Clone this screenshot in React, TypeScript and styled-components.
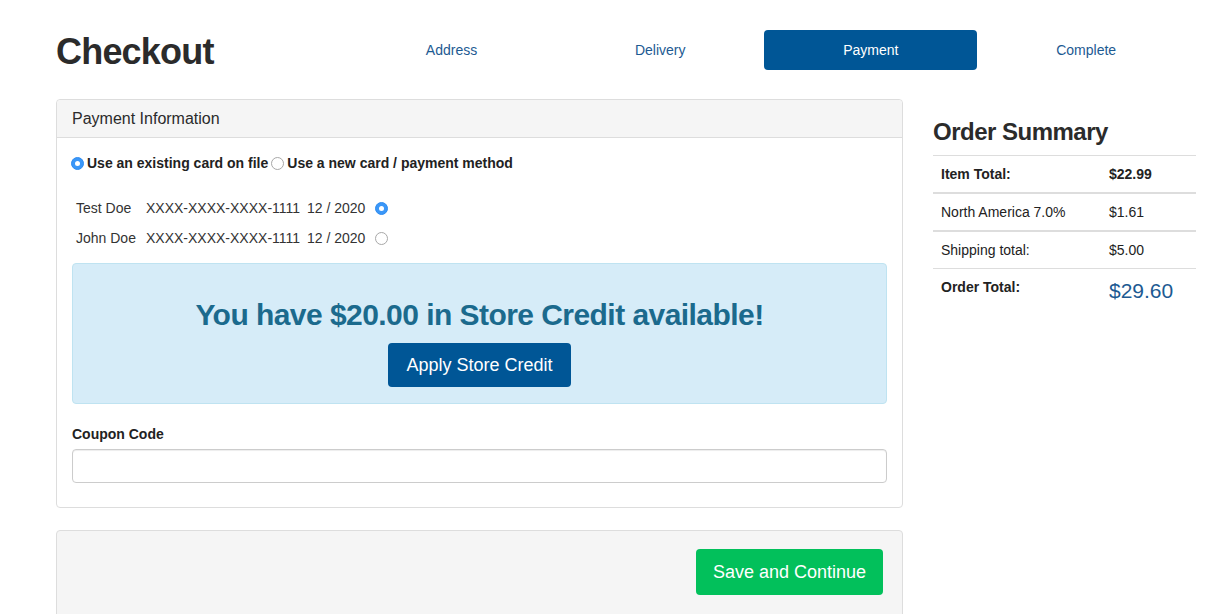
import React from "react";
import styled, { createGlobalStyle } from "styled-components";

const Global = createGlobalStyle`
  html, body { margin: 0; padding: 0; background: #fff; }
  body {
    font-family: "Liberation Sans", Arial, Helvetica, sans-serif;
    font-size: 14px;
    line-height: 20px;
    color: #333;
  }
  * { box-sizing: border-box; }
`;

const Page = styled.div`
  width: 1212px;
  height: 614px;
  overflow: hidden;
  padding-left: 56px;
`;

const Row = styled.div<{ $cols: string; $top?: number }>`
  display: grid;
  grid-template-columns: ${(p) => p.$cols};
  column-gap: 30px;
  width: 1141px;
  margin-top: ${(p) => p.$top ?? 0}px;
  align-items: start;
`;

const Title = styled.h1`
  margin: 32px 0 0;
  font-size: 36px;
  line-height: 40px;
  font-weight: 700;
  letter-spacing: -0.8px;
  color: #2b2b2b;
`;

const Steps = styled.nav`
  display: flex;
  margin-top: 30px;
`;

const Step = styled.div<{ $active?: boolean }>`
  flex: 1 1 auto;
  text-align: center;
  padding: 10px 15px;
  line-height: 20px;
  font-size: 14px;
  border-radius: 4px;
  color: ${(p) => (p.$active ? "#fff" : "#1d5a92")};
  background: ${(p) => (p.$active ? "#005696" : "transparent")};
`;

const Card = styled.section<{ $muted?: boolean; $top?: number }>`
  border: 1px solid #ddd;
  border-radius: 4px;
  background: ${(p) => (p.$muted ? "#f5f5f5" : "#fff")};
  margin-top: ${(p) => p.$top ?? 0}px;
`;

const CardHeader = styled.div`
  background: #f5f5f5;
  border-bottom: 1px solid #ddd;
  padding: 10px 15px;
  font-size: 16px;
  line-height: 17px;
  color: #2b2b2b;
  border-radius: 4px 4px 0 0;
`;

const CardBody = styled.div`
  padding: 15px 15px 24px;
`;

const MethodRow = styled.div`
  display: flex;
  align-items: center;
  gap: 3px;
  margin-left: -1px;
  font-weight: 700;
  font-size: 14px;
  line-height: 20px;
  color: #222;
`;

const Radio = styled.span<{ $checked?: boolean }>`
  position: relative;
  display: inline-block;
  width: 13px;
  height: 13px;
  border-radius: 50%;
  flex: none;
  background: ${(p) => (p.$checked ? "#3a97f8" : "#fff")};
  border: 1px solid ${(p) => (p.$checked ? "#2f8cf0" : "#a8a8a8")};
  &::after {
    content: "";
    display: ${(p) => (p.$checked ? "block" : "none")};
    position: absolute;
    left: 3px;
    top: 3px;
    width: 5px;
    height: 5px;
    border-radius: 50%;
    background: #fff;
  }
`;

const CardsTable = styled.table`
  margin-top: 20px;
  border-collapse: collapse;
  table-layout: fixed;
`;

const CardCell = styled.td<{ $w: number }>`
  width: ${(p) => p.$w}px;
  padding: 5px 0 5px 4px;
  line-height: 20px;
  white-space: nowrap;
  vertical-align: middle;
  font-size: 14px;
  color: #333;
  ${Radio} { vertical-align: -2px; }
`;

const CreditAlert = styled.div`
  margin-top: 10px;
  background: #d6ecf8;
  border: 1px solid #bfe3f1;
  border-radius: 4px;
  padding: 34px 15px 16px;
  display: flex;
  flex-direction: column;
  align-items: center;
`;

const CreditHeading = styled.h3`
  margin: 0 0 12px;
  font-size: 30px;
  line-height: 33px;
  font-weight: 700;
  letter-spacing: -0.55px;
  color: #1b6a8d;
`;

const Button = styled.button<{ $tone: "blue" | "green" }>`
  border: none;
  border-radius: 4px;
  font-family: inherit;
  font-size: 18px;
  line-height: 24px;
  color: #fff;
  cursor: pointer;
  background: ${(p) => (p.$tone === "blue" ? "#005696" : "#02c05b")};
  padding: ${(p) => (p.$tone === "blue" ? "10px 18px" : "11px 17px")};
`;

const Label = styled.label`
  display: block;
  margin-top: 20px;
  margin-bottom: 5px;
  font-weight: 700;
  font-size: 14px;
  line-height: 20px;
  color: #222;
`;

const Input = styled.input`
  display: block;
  width: 100%;
  height: 34px;
  border: 1px solid #ccc;
  border-radius: 4px;
  box-shadow: inset 0 1px 1px rgba(0, 0, 0, 0.075);
  padding: 6px 12px;
  font-family: inherit;
  font-size: 14px;
`;

const Actions = styled.div`
  display: flex;
  justify-content: flex-end;
  padding: 18px 19px 30px;
`;

const SummaryTitle = styled.h3`
  margin: 20px 0 10px;
  font-size: 24px;
  line-height: 26px;
  font-weight: 700;
  letter-spacing: -0.5px;
  color: #2b2b2b;
`;

const SummaryTable = styled.table`
  width: 263px;
  border-collapse: collapse;
`;

const SummaryRow = styled.tr<{ $thick?: boolean }>`
  border-top: ${(p) => (p.$thick ? 2 : 1)}px solid #ddd;
`;

const SummaryCell = styled.td<{ $bold?: boolean; $w?: number }>`
  padding: 8px;
  line-height: 20px;
  font-size: 14px;
  vertical-align: top;
  font-weight: ${(p) => (p.$bold ? 700 : 400)};
  width: ${(p) => (p.$w ? `${p.$w}px` : "auto")};
  color: #222;
`;

const GrandTotal = styled.span`
  display: block;
  font-size: 21px;
  line-height: 28px;
  color: #1d5a92;
`;

const cards = [
  { name: "Test Doe", number: "XXXX-XXXX-XXXX-1111", exp: "12 / 2020", checked: true },
  { name: "John Doe", number: "XXXX-XXXX-XXXX-1111", exp: "12 / 2020", checked: false },
];

export default function App() {
  return (
    <>
      <Global />
      <Page>
        <Row $cols="261px 848px">
          <Title>Checkout</Title>
          <Steps>
            <Step>Address</Step>
            <Step>Delivery</Step>
            <Step $active>Payment</Step>
            <Step>Complete</Step>
          </Steps>
        </Row>
        <Row $cols="847px 264px" $top={27}>
          <div>
            <Card>
              <CardHeader>Payment Information</CardHeader>
              <CardBody>
                <MethodRow>
                  <Radio $checked />
                  <span>Use an existing card on file</span>
                  <Radio />
                  <span>Use a new card / payment method</span>
                </MethodRow>
                <CardsTable>
                  <tbody>
                    {cards.map((c) => (
                      <tr key={c.name}>
                        <CardCell $w={70}>{c.name}</CardCell>
                        <CardCell $w={161}>{c.number}</CardCell>
                        <CardCell $w={68}>{c.exp}</CardCell>
                        <CardCell $w={24}>
                          <Radio $checked={c.checked} />
                        </CardCell>
                      </tr>
                    ))}
                  </tbody>
                </CardsTable>
                <CreditAlert>
                  <CreditHeading>You have $20.00 in Store Credit available!</CreditHeading>
                  <Button $tone="blue">Apply Store Credit</Button>
                </CreditAlert>
                <Label>Coupon Code</Label>
                <Input type="text" />
              </CardBody>
            </Card>
            <Card $muted $top={22}>
              <Actions>
                <Button $tone="green">Save and Continue</Button>
              </Actions>
            </Card>
          </div>
          <aside>
            <SummaryTitle>Order Summary</SummaryTitle>
            <SummaryTable>
              <tbody>
                <SummaryRow>
                  <SummaryCell $bold $w={168}>Item Total:</SummaryCell>
                  <SummaryCell $bold>$22.99</SummaryCell>
                </SummaryRow>
                <SummaryRow $thick>
                  <SummaryCell>North America 7.0%</SummaryCell>
                  <SummaryCell>$1.61</SummaryCell>
                </SummaryRow>
                <SummaryRow $thick>
                  <SummaryCell>Shipping total:</SummaryCell>
                  <SummaryCell>$5.00</SummaryCell>
                </SummaryRow>
                <SummaryRow>
                  <SummaryCell $bold>Order Total:</SummaryCell>
                  <SummaryCell>
                    <GrandTotal>$29.60</GrandTotal>
                  </SummaryCell>
                </SummaryRow>
              </tbody>
            </SummaryTable>
          </aside>
        </Row>
      </Page>
    </>
  );
}
